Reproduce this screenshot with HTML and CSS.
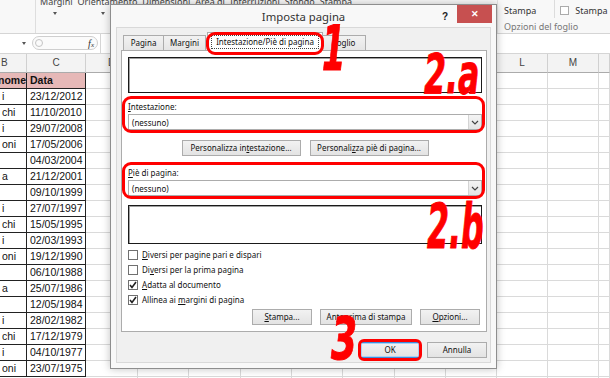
FILE: index.html
```html
<!DOCTYPE html>
<html lang="it">
<head>
    <meta charset="UTF-8">
    <title>Imposta pagina</title>
    <link rel="stylesheet" href="styles.css">
</head>
<body>

<div class="excel">
    <div class="ribbon">
        <div class="rb-first"></div>
        <div class="rb-page">
            <div class="rb-labels">
                <span>Margini</span><span>Orientamento</span><span>Dimensioni</span><span>Area di</span><span>Interruzioni</span><span>Sfondo</span><span>Stampa</span>
            </div>
            <div class="rb-arrows"><span class="caret"></span><span class="caret"></span></div>
        </div>
        <div class="rb-sheet">
            <div class="rb-row">
                <span>Stampa</span>
                <span class="rb-sep"></span>
                <span class="rb-box"></span>
                <span>Stampa</span>
            </div>
            <div class="rb-group">Opzioni del foglio</div>
        </div>
    </div>

    <div class="formula">
        <div class="namebox"><span class="caret"></span></div>
        <div class="fx-buttons"><span class="grip"></span><span class="fx">f<small>x</small></span></div>
        <div class="fx-input"></div>
    </div>

    <div class="colheads">
        <div class="ch cb">B</div>
        <div class="ch cc">C</div>
        <div class="ch w52">D</div>
        <div class="ch w51">E</div>
        <div class="ch w52">F</div>
        <div class="ch w51">G</div>
        <div class="ch w51">H</div>
        <div class="ch w52">I</div>
        <div class="ch w51">J</div>
        <div class="ch w51">K</div>
        <div class="ch w51">L</div>
        <div class="ch w51">M</div>
        <div class="ch last"></div>
    </div>

    <div class="sheet">
        <div class="table">
            <div class="cell b head"><span class="cut">nome</span></div><div class="cell head">Data</div>
            <div class="cell b">i</div><div class="cell">23/12/2012</div>
            <div class="cell b">chi</div><div class="cell">11/10/2010</div>
            <div class="cell b">i</div><div class="cell">29/07/2008</div>
            <div class="cell b">oni</div><div class="cell">17/05/2006</div>
            <div class="cell b"></div><div class="cell">04/03/2004</div>
            <div class="cell b">a</div><div class="cell">21/12/2001</div>
            <div class="cell b"></div><div class="cell">09/10/1999</div>
            <div class="cell b">i</div><div class="cell">27/07/1997</div>
            <div class="cell b">chi</div><div class="cell">15/05/1995</div>
            <div class="cell b">i</div><div class="cell">02/03/1993</div>
            <div class="cell b">oni</div><div class="cell">19/12/1990</div>
            <div class="cell b"></div><div class="cell">06/10/1988</div>
            <div class="cell b">a</div><div class="cell">25/07/1986</div>
            <div class="cell b"></div><div class="cell">12/05/1984</div>
            <div class="cell b">i</div><div class="cell">28/02/1982</div>
            <div class="cell b">chi</div><div class="cell">17/12/1979</div>
            <div class="cell b">i</div><div class="cell">04/10/1977</div>
            <div class="cell b">oni</div><div class="cell">23/07/1975</div>
        </div>
        <div class="col w52"></div>
        <div class="col w51"></div>
        <div class="col w52"></div>
        <div class="col w51"></div>
        <div class="col w51"></div>
        <div class="col w52"></div>
        <div class="col w51"></div>
        <div class="col w51"></div>
        <div class="col w51"></div>
        <div class="col w51"></div>
        <div class="col last"></div>
    </div>
</div>

<div class="dialog">
    <div class="titlebar">
        <span class="title">Imposta pagina</span>
        <div class="title-tools">
            <span class="help">?</span>
            <span class="close">&#x2715;</span>
        </div>
    </div>

    <div class="client">
        <div class="tabs">
            <span class="tab t-pagina">Pagina</span>
            <span class="tab t-margini">Margini</span>
            <span class="tab active mark mark-tab"><span class="focus">Intestazione/Piè di pagina</span></span>
            <span class="tab t-foglio">Foglio</span>
        </div>

        <div class="panel">
            <div class="preview"></div>

            <div class="field mark mark-field">
                <div class="label"><u>I</u>ntestazione:</div>
                <div class="select">(nessuno)<span class="drop"><svg width="8" height="5" viewBox="0 0 8 5"><polyline points="1,1 4,4 7,1" fill="none" stroke="#444" stroke-width="1.2"/></svg></span></div>
            </div>

            <div class="btn-row center">
                <span class="btn wide">Personalizza in<u>t</u>estazione...</span>
                <span class="btn wide">Personali<u>z</u>za piè di pagina...</span>
            </div>

            <div class="field mark mark-field second">
                <div class="label"><u>P</u>iè di pagina:</div>
                <div class="select">(nessuno)<span class="drop"><svg width="8" height="5" viewBox="0 0 8 5"><polyline points="1,1 4,4 7,1" fill="none" stroke="#444" stroke-width="1.2"/></svg></span></div>
            </div>

            <div class="preview tall"></div>

            <div class="checks">
                <div class="check"><span class="box"></span><span><u>D</u>iversi per pagine pari e dispari</span></div>
                <div class="check"><span class="box"></span><span>Di<u>v</u>ersi per la prima pagina</span></div>
                <div class="check"><span class="box"><svg width="8" height="8" viewBox="0 0 8 8"><polyline points="1,4 3,6.5 7,1" fill="none" stroke="#222" stroke-width="1.6"/></svg></span><span><u>A</u>datta al documento</span></div>
                <div class="check"><span class="box"><svg width="8" height="8" viewBox="0 0 8 8"><polyline points="1,4 3,6.5 7,1" fill="none" stroke="#222" stroke-width="1.6"/></svg></span><span>Allinea ai <u>m</u>argini di pagina</span></div>
            </div>

            <div class="btn-row end">
                <span class="btn small"><u>S</u>tampa...</span>
                <span class="btn mid">An<u>t</u>eprima di stampa</span>
                <span class="btn small"><u>O</u>pzioni...</span>
            </div>
        </div>

        <div class="dlg-buttons">
            <span class="btn small default mark mark-ok">OK</span>
            <span class="btn small">Annulla</span>
        </div>
    </div>

    <span class="num n1">1</span>
    <span class="num n2a">2.a</span>
    <span class="num n2b">2.b</span>
    <span class="num n3">3</span>
</div>

</body>
</html>
```

FILE: styles.css
```css
body {
    margin: 0;
    width: 610px;
    height: 378px;
    overflow: hidden;
    position: relative;
    background: #fff;
    font-family: "Liberation Sans", Arial, sans-serif;
}

/* excel behind the dialog */
.ribbon {
    height: 34px;
    box-sizing: border-box;
    border-bottom: 1px solid #d5d5d5;
    background: #f8f8f8;
    display: flex;
    font-family: "Noto Sans", sans-serif;
    font-size: 9px;
    color: #444;
}
.rb-first {
    width: 35px;
    border-right: 1px solid #dedede;
}
.rb-page {
    width: 461px;
    padding-left: 4px;
    box-sizing: border-box;
}
.rb-labels {
    margin-top: -4px;
    line-height: 11px;
    display: flex;
    gap: 5px;
    white-space: nowrap;
}
.rb-arrows {
    display: flex;
    gap: 44px;
    padding-left: 13px;
    margin-top: 5px;
}
.caret {
    display: inline-block;
    width: 0;
    height: 0;
    border-left: 2.5px solid transparent;
    border-right: 2.5px solid transparent;
    border-top: 3px solid #555;
}
.rb-sheet {
    flex: 1;
    padding-left: 6px;
    border-left: 1px solid #e2e2e2;
}
.rb-row {
    display: flex;
    align-items: center;
    margin-top: 4px;
    height: 13px;
    color: #333;
}
.rb-sep {
    width: 1px;
    height: 20px;
    margin: -6px 0 0 18px;
    background: #dcdcdc;
}
.rb-box {
    width: 9px;
    height: 9px;
    box-sizing: border-box;
    border: 1px solid #ababab;
    background: #fff;
    margin: 0 6px 0 5px;
}
.rb-group {
    margin-top: 4px;
    color: #777;
    line-height: 12px;
}

.formula {
    height: 20px;
    box-sizing: border-box;
    border-bottom: 1px solid #d5d5d5;
    display: flex;
    background: #fff;
}
.namebox {
    width: 28px;
    display: flex;
    justify-content: flex-end;
    align-items: center;
    padding-right: 2px;
    box-sizing: border-box;
}
.fx-buttons {
    width: 66px;
    height: 14px;
    margin: 2px 0 0 4px;
    box-sizing: border-box;
    border: 1px solid #cfcfcf;
    border-radius: 8px;
    display: flex;
    align-items: center;
    justify-content: space-between;
    padding: 0 3px 0 2px;
    background: #fbfbfb;
}
.grip {
    width: 6px;
    height: 6px;
    border: 1px solid #c4c4c4;
    border-radius: 50%;
}
.fx {
    font: italic 10px "Liberation Serif", serif;
    color: #333;
}
.fx small {
    font-size: 7px;
}
.fx-input {
    flex: 1;
    margin-left: 2px;
    border-left: 1px solid #d5d5d5;
}

.colheads {
    display: flex;
    height: 19px;
    background: #f3f3f3;
}
.ch {
    box-sizing: border-box;
    height: 19px;
    border-right: 1px solid #d0d0d0;
    border-bottom: 1px solid #ababab;
    text-align: center;
    line-height: 18px;
    font-size: 10px;
    color: #444;
}
.cb {
    width: 27px;
    text-align: left;
    padding-left: 1px;
}
.cc {
    width: 59px;
}
.w51 {
    width: 51px;
}
.w52 {
    width: 52px;
}
.last {
    flex: 1;
}

.sheet {
    display: flex;
    height: 305px;
    background: repeating-linear-gradient(to bottom, transparent 0 15px, #dadada 15px 16px);
}
.col {
    box-sizing: border-box;
    border-right: 1px solid #dadada;
}
.table {
    display: grid;
    grid-template-columns: 27px 59px;
    grid-auto-rows: 16px;
    align-self: flex-start;
    background: #fff;
}
.cell {
    box-sizing: border-box;
    border-right: 1px solid #222;
    border-bottom: 1px solid #222;
    font-size: 10.5px;
    line-height: 15px;
    padding-left: 3px;
    white-space: nowrap;
    overflow: hidden;
    color: #111;
}
.cell.b {
    padding-left: 2px;
}
.cell.head {
    background: #e6b8b7;
    font-weight: bold;
}
.cut {
    margin-left: -4px;
}

/* dialog */
.dialog {
    position: absolute;
    left: 110px;
    top: 4px;
    width: 387px;
    height: 365px;
    box-sizing: border-box;
    border: 1px solid #8e8e8e;
    background: #f8f8f8;
    box-shadow: 0 0 8px rgba(0, 0, 0, 0.25);
    display: flex;
    flex-direction: column;
    font-family: "Noto Sans", sans-serif;
    font-size: 8px;
    color: #111;
}
.titlebar {
    height: 22px;
    flex-shrink: 0;
    display: grid;
    grid-template-columns: 1fr auto 1fr;
}
.title {
    grid-column: 2;
    font-size: 11.3px;
    line-height: 23px;
    color: #333;
}
.title-tools {
    grid-column: 3;
    justify-self: end;
    display: flex;
    align-items: flex-start;
}
.help {
    font: bold 10px "Liberation Sans", sans-serif;
    margin: 6px 9px 0 0;
    color: #222;
}
.close {
    width: 35px;
    height: 18px;
    margin-right: 4px;
    background: #c75050;
    color: #fff;
    text-align: center;
    line-height: 18px;
    font-size: 9px;
    font-weight: bold;
}
.client {
    flex: 1;
    margin: 0 5px 5px;
    border: 1px solid #d9d9d9;
    background: #f0f0f0;
    padding: 0 3px 0 4px;
    display: flex;
    flex-direction: column;
}
.tabs {
    height: 22px;
    display: flex;
    align-items: flex-end;
    padding-left: 2px;
}
.tab {
    height: 15px;
    box-sizing: border-box;
    border: 1px solid #acacac;
    border-bottom: none;
    background: linear-gradient(#f2f2f2, #e5e5e5);
    text-align: center;
    line-height: 14px;
    margin-right: -1px;
}
.t-pagina {
    width: 41px;
}
.t-margini {
    width: 43px;
    margin-right: 1px;
}
.t-foglio {
    width: 44px;
}
.tab.active {
    width: 116px;
    height: 19px;
    margin: 0 -1px -1px 0;
    padding: 2px 3px 0;
    background: #fff;
    position: relative;
    z-index: 1;
}
.focus {
    display: block;
    border: 1px dotted #444;
    line-height: 12px;
}
.panel {
    height: 282px;
    box-sizing: border-box;
    border: 1px solid #acacac;
    background: #fff;
    padding: 6px 4px 0 6px;
}
.preview {
    height: 36px;
    box-sizing: border-box;
    border: 1px solid #1a1a1a;
    box-shadow: inset 1px 1px 0 #a0a0a0;
    background: #fff;
}
.preview.tall {
    height: 39px;
    margin-top: 9px;
}
.field {
    margin-top: 8px;
}
.field.second {
    margin-top: 11px;
}
.label {
    line-height: 12px;
}
.select {
    height: 16px;
    margin-top: 1px;
    box-sizing: border-box;
    border: 1px solid #acacac;
    background: #fff;
    display: flex;
    align-items: center;
    padding-left: 3px;
}
.drop {
    margin-left: auto;
    width: 13px;
    height: 14px;
    box-sizing: border-box;
    border-left: 1px solid #d4d4d4;
    background: linear-gradient(#f4f4f4, #e4e4e4);
    display: flex;
    align-items: center;
    justify-content: center;
}
.btn-row {
    display: flex;
}
.btn-row.center {
    justify-content: center;
    gap: 9px;
    margin-top: 10px;
}
.btn-row.end {
    justify-content: flex-end;
    gap: 8px;
    margin: 2px 2px 0 0;
}
.btn {
    height: 16px;
    box-sizing: border-box;
    border: 1px solid #acacac;
    background: linear-gradient(#f2f2f2, #e3e3e3);
    text-align: center;
    line-height: 14px;
    white-space: nowrap;
}
.btn.wide {
    width: 119px;
}
.btn.mid {
    width: 92px;
}
.btn.small {
    width: 60px;
}
.btn.default {
    border-color: #3c8fdc;
    box-shadow: inset 0 0 0 1px #a9d1f5;
}
.checks {
    margin-top: 3px;
}
.check {
    height: 15px;
    display: flex;
    align-items: center;
}
.box {
    width: 10px;
    height: 10px;
    box-sizing: border-box;
    border: 1px solid #707070;
    background: #fff;
    margin-right: 4px;
    display: flex;
    align-items: center;
    justify-content: center;
}
.dlg-buttons {
    display: flex;
    justify-content: flex-end;
    gap: 7px;
    margin-top: 10px;
}

/* red annotations drawn over the screenshot */
.mark {
    position: relative;
}
.mark::after {
    content: "";
    position: absolute;
    border: 3px solid #f00;
    border-radius: 9px;
}
.mark-tab::after {
    top: -1px;
    bottom: -4px;
    left: -2px;
    right: -2px;
}
.mark-field::after {
    top: -5px;
    bottom: -3px;
    left: -6px;
    right: -3px;
}
.mark-ok::after {
    top: -4px;
    bottom: -4px;
    left: -3px;
    right: -3px;
    border-radius: 6px;
}
.num {
    position: absolute;
    z-index: 2;
    color: #f00;
    font: italic bold 44px/44px "Liberation Sans Narrow", "DejaVu Sans Condensed", sans-serif;
    -webkit-text-stroke: 0.7px #f00;
    transform-origin: 0 0;
}
.n1 {
    left: 211px;
    top: 12px;
    transform: scale(0.85, 1.43);
}
.n2a {
    left: 313px;
    top: 42px;
    transform: scale(0.8, 1.25);
}
.n2b {
    left: 316px;
    top: 191px;
    transform: scale(0.8, 1.4);
}
.n3 {
    left: 220px;
    top: 305px;
    transform: scale(0.95, 1.33);
}
```
